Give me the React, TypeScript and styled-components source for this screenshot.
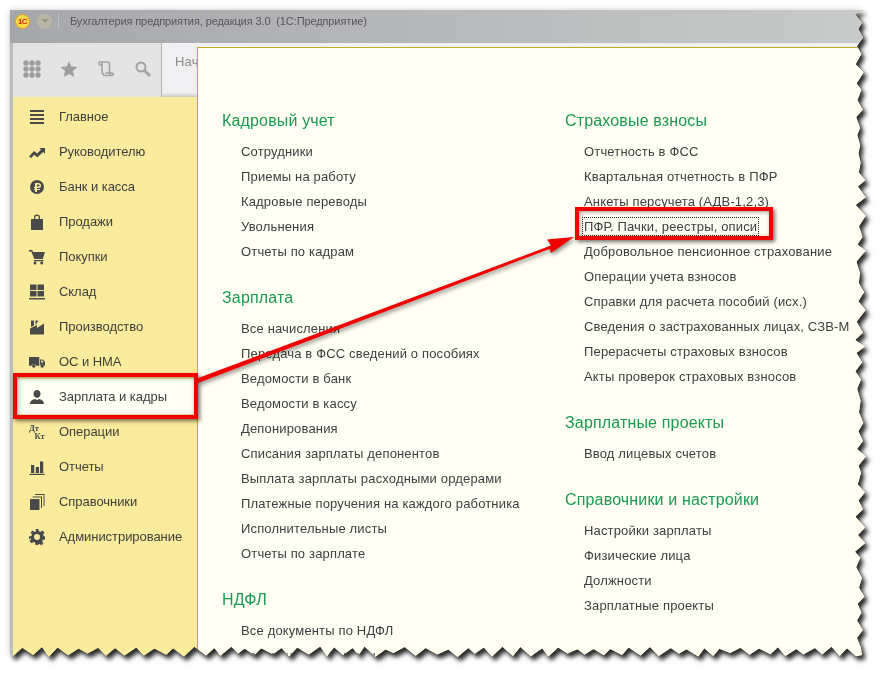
import React from "react";
import styled, { createGlobalStyle } from "styled-components";

const Global = createGlobalStyle`
  html, body { margin: 0; padding: 0; background: #fff; }
  body { width: 884px; height: 674px; overflow: hidden; font-family: "Liberation Sans", Arial, sans-serif; }
`;

function torn(): string {
  // seeded jagged outline of the screenshot's torn right and bottom edges
  let s = 11;
  const r = () => { s = (s * 16807) % 2147483647; return s / 2147483647; };
  const pts: string[] = ["10px 10px", "864px 10px"];
  let y = 14;
  while (y < 644) {
    pts.push(`${(855 + r() * 4).toFixed(1)}px ${y.toFixed(1)}px`);
    y += 6 + r() * 6;
    pts.push(`${(860 + r() * 6).toFixed(1)}px ${y.toFixed(1)}px`);
    y += 6 + r() * 6;
  }
  pts.push("862px 655px");
  let x = 856;
  while (x > 12) {
    pts.push(`${x.toFixed(1)}px ${(653 + r() * 4).toFixed(1)}px`);
    x -= 6 + r() * 6;
    pts.push(`${x.toFixed(1)}px ${(646.500 + r() * 3).toFixed(1)}px`);
    x -= 6 + r() * 6;
  }
  pts.push("10px 654px");
  return `polygon(${pts.join(",")})`;
}
const tornClip = torn();

const Stage = styled.div`
  position: relative;
  width: 884px;
  height: 674px;
  overflow: hidden;
`;
const Shadow = styled.div`
  width: 884px;
  height: 674px;
  filter: drop-shadow(3px 4px 2px rgba(0,0,0,.8)) drop-shadow(0 0 3px rgba(0,0,0,.2));
`;
const Sheet = styled.div`
  width: 884px;
  height: 674px;
  box-sizing: border-box;
  padding: 10px 0 0 10px;
  display: flex;
  flex-direction: column;
`;
const Win = styled.div`
  position: relative;
  width: 860px;
  height: 650px;
  display: flex;
  flex-direction: column;
  overflow: hidden;
  background: #fbeb9d;
`;
const TitleBar = styled.div`
  height: 33px;
  flex: none;
  box-sizing: border-box;
  display: flex;
  align-items: center;
  padding: 0 0 11px 5px;
  background: linear-gradient(90deg, #a6a7aa 0%, #c9caca 100%);
`;
const Logo = styled.div`
  width: 13px;
  height: 13px;
  border-radius: 50%;
  background: #f9d94a;
  border: 1px solid #dd9c2c;
  color: #d8221a;
  font: bold 8px "Liberation Sans", sans-serif;
  letter-spacing: -0.5px;
  display: flex;
  align-items: center;
  justify-content: center;
`;
const MenuDot = styled.div`
  width: 15px;
  height: 15px;
  margin-left: 7px;
  border-radius: 50%;
  background: #bab6a6;
  display: flex;
  align-items: center;
  justify-content: center;
  &::after {
    content: "";
    border: 4px solid transparent;
    border-top-color: #98958a;
    border-bottom: 0;
  }
`;
const TitleSep = styled.div`
  width: 1px;
  height: 15px;
  margin: 0 11px 0 6px;
  background: #bdbec0;
`;
const TitleText = styled.div`
  font-size: 11px;
  letter-spacing: -0.11px;
  color: #56565a;
  white-space: pre;
`;
const Body = styled.div`
  flex: 1;
  display: flex;
  flex-direction: column;
  min-height: 0;
  border-left: 3px solid #bcbcbc;
`;
const TopRow = styled.div`
  height: 54px;
  flex: none;
  display: flex;
`;
const Tools = styled.div`
  width: 149px;
  flex: none;
  box-sizing: border-box;
  display: flex;
  align-items: flex-start;
  padding: 17px 0 0 10px;
  gap: 19px;
  background: #e4e4e4;
  border-right: 1px solid #b4b4b4;
`;
const TabStrip = styled.div`
  flex: 1;
  box-sizing: border-box;
  padding: 11px 0 0 13px;
  font-size: 13px;
  letter-spacing: 0.2px;
  color: #8a8a8a;
  background: linear-gradient(180deg, #f0f0f2 0%, #f0f0f2 92%, #c9c9c9 100%);
`;
const Side = styled.div`
  width: 184px;
  flex: 1;
  display: flex;
  flex-direction: column;
  background: #fbeb9d;
`;
const Nav = styled.nav`
  padding-top: 2px;
  display: flex;
  flex-direction: column;
`;
const NavRow = styled.div<{ $active?: boolean }>`
  height: 35px;
  display: flex;
  align-items: center;
  padding-left: 16px;
  gap: 14px;
  font-size: 13px;
  letter-spacing: -0.05px;
  color: #3e3e3e;
  background: ${(p) => (p.$active ? "#fffff3" : "transparent")};
`;
const IconBox = styled.span`
  width: 16px;
  height: 16px;
  flex: none;
  display: block;
  color: #4a4a4a;
  svg { display: block; width: 16px; height: 16px; fill: currentColor; }
`;
const Panel = styled.div`
  position: absolute;
  left: 187px;
  top: 37px;
  right: 0;
  bottom: 0;
  box-sizing: border-box;
  background: #fffff3;
  border-top: 1px solid #c3a926;
  border-left: 1px solid #c3a926;
  display: grid;
  grid-template-columns: 343px 1fr;
  padding: 63px 0 0 24px;
  overflow: hidden;
`;
const Column = styled.div`
  display: flex;
  flex-direction: column;
  gap: 24px;
`;
const Section = styled.section`
  display: flex;
  flex-direction: column;
`;
const Heading = styled.div`
  height: 20px;
  line-height: 20px;
  margin-bottom: 8px;
  font-size: 16px;
  letter-spacing: 0.16px;
  color: #1b9a53;
`;
const LinkRow = styled.div`
  height: 25px;
  line-height: 25px;
  padding-left: 19px;
  font-size: 13px;
  letter-spacing: 0.16px;
  white-space: nowrap;
  color: #3e3e3e;
`;
const Focused = styled.span`
  outline: 1px dotted #222;
  outline-offset: 1px;
`;
const RedBox = styled.div<{ $x: number; $y: number; $w: number; $h: number }>`
  position: absolute;
  left: ${(p) => p.$x}px;
  top: ${(p) => p.$y}px;
  width: ${(p) => p.$w}px;
  height: ${(p) => p.$h}px;
  box-sizing: border-box;
  border: 4px solid #f00000;
  box-shadow: 2px 2px 4px rgba(0,0,0,.55), inset 1px 1px 4px rgba(0,0,0,.4);
`;
const ArrowSvg = styled.svg`
  position: absolute;
  left: 0;
  top: 0;
  width: 884px;
  height: 674px;
  pointer-events: none;
  filter: drop-shadow(2px 2px 2px rgba(0,0,0,.45));
`;
const DkText = styled.text`
  font: bold 8.500px "Liberation Serif", serif;
`;

const icons: Record<string, React.ReactNode> = {
  main: <path d="M1 1h14v2H1zM1 5h14v2H1zM1 9h14v2H1zM1 13h14v2H1z" />,
  chief: <path d="M0 12.500l5-5.500 3.200 2.500L12 5.500 10.300 4H16v5.700l-1.800-1.800-5.800 5.300-3.200-2.500-3 3.200z" />,
  bank: <path fillRule="evenodd" d="M8 1a7 7 0 110 14A7 7 0 018 1zM6 4v4H5v1h1v1H5v1h1v2h2v-2h3v-1H8V9h1.500a2.500 2.500 0 000-5zM8 5.500h1.500a1 1 0 010 2H8z" />,
  sales: <path fillRule="evenodd" d="M5 5V3.500a3 3 0 016 0V5h3v11H2V5zM6.300 5h3.400V3.500a1.700 1.700 0 00-3.400 0z" />,
  buy: <path d="M0 1h3.300l.7 2h12l-2.200 7H5.300L2.300 2.600H0zM5 11h9.500v1.200H5zM6 12.500a1.500 1.500 0 110 3 1.500 1.500 0 010-3zM12.700 12.500a1.500 1.500 0 110 3 1.500 1.500 0 010-3z" />,
  stock: <path d="M1 .500h6.500V6H1zM8.500.500H15V6H8.500zM1 7h6.500v5.500H1zM8.500 7H15v5.500H8.500zM0 14h16v1.500H0z" />,
  prod: <path d="M2 1.500h3v5l-3 1.500zM6.500 1.500h3L6.500 6zM1 15.500V9.500l7-3.500v3l7-4.500v11z" />,
  os: <path fillRule="evenodd" d="M0 3h10.300v8.700H7a2.300 2.300 0 00-4.400 0H0zM11 5.500h3l2 2.500v3.700h-.7a2.300 2.300 0 00-4.300 0zM12 6.500v2h2.700l-1.400-2zM4.800 10.300a1.700 1.700 0 110 3.400 1.700 1.700 0 010-3.400zM13.200 10.300a1.700 1.700 0 110 3.400 1.700 1.700 0 010-3.400z" />,
  user: <path d="M8 1c2 0 3.500 1.500 3.500 3.800S10 9 8 9 4.500 7.100 4.500 4.800 6 1 8 1zM1 15c0-3 2.500-4.500 5-5l2 1 2-1c2.500.5 5 2 5 5z" />,
  ops: (
    <>
      <DkText x="0" y="6.500">Дт</DkText>
      <DkText x="5.500" y="15">Кт</DkText>
    </>
  ),
  rep: <path d="M2 6h3.200v8H2zM6.800 8H10v6H6.800zM11 2.500h3.200V14H11zM0.500 14.700h15V16H.5z" />,
  ref: <path d="M1 5h9.500v11H1zM3.500 2.500H13V14h-1V3.500H3.500zM6 0h9.500v12h-1V1H6z" />,
  admin: <path fillRule="evenodd" d="M6.500 0h3l.4 2.300 1.500.6 2-1.300 2 2-1.300 2 .6 1.500L16 7.500v3l-2.300.4-.6 1.400 1.300 2-2 2-2-1.300-1.500.6L9.500 16h-3l-.4-2.400-1.500-.6-2 1.300-2-2 1.300-2-.6-1.400L0 10.500v-3l2.300-.4.6-1.500-1.300-2 2-2 2 1.300 1.500-.6zM8 5a3 3 0 100 6 3 3 0 000-6z" />,
};

const nav: [string, string][] = [
  ["main", "Главное"], ["chief", "Руководителю"], ["bank", "Банк и касса"], ["sales", "Продажи"],
  ["buy", "Покупки"], ["stock", "Склад"], ["prod", "Производство"], ["os", "ОС и НМА"],
  ["user", "Зарплата и кадры"], ["ops", "Операции"], ["rep", "Отчеты"], ["ref", "Справочники"], ["admin", "Администрирование"],
];

type Sec = { title: string; items: string[] };
const left: Sec[] = [
  { title: "Кадровый учет", items: ["Сотрудники", "Приемы на работу", "Кадровые переводы", "Увольнения", "Отчеты по кадрам"] },
  { title: "Зарплата", items: ["Все начисления", "Передача в ФСС сведений о пособиях", "Ведомости в банк", "Ведомости в кассу", "Депонирования", "Списания зарплаты депонентов", "Выплата зарплаты расходными ордерами", "Платежные поручения на каждого работника", "Исполнительные листы", "Отчеты по зарплате"] },
  { title: "НДФЛ", items: ["Все документы по НДФЛ", "Заявления на вычеты"] },
];
const right: Sec[] = [
  { title: "Страховые взносы", items: ["Отчетность в ФСС", "Квартальная отчетность в ПФР", "Анкеты персучета (АДВ-1,2,3)", "ПФР. Пачки, реестры, описи", "Добровольное пенсионное страхование", "Операции учета взносов", "Справки для расчета пособий (исх.)", "Сведения о застрахованных лицах, СЗВ-М", "Перерасчеты страховых взносов", "Акты проверок страховых взносов"] },
  { title: "Зарплатные проекты", items: ["Ввод лицевых счетов"] },
  { title: "Справочники и настройки", items: ["Настройки зарплаты", "Физические лица", "Должности", "Зарплатные проекты"] },
];

const renderSections = (list: Sec[]) =>
  list.map((s) => (
    <Section key={s.title}>
      <Heading>{s.title}</Heading>
      {s.items.map((i) => (
        <LinkRow key={i}>{i === "ПФР. Пачки, реестры, описи" ? <Focused>{i}</Focused> : i}</LinkRow>
      ))}
    </Section>
  ));

export default function App() {
  return (
    <Stage>
      <Global />
      <Shadow>
        <Sheet style={{ clipPath: tornClip }}>
          <Win>
            <TitleBar>
              <Logo>1С</Logo>
              <MenuDot />
              <TitleSep />
              <TitleText>Бухгалтерия предприятия, редакция 3.0  (1С:Предприятие)</TitleText>
            </TitleBar>
            <Body>
              <TopRow>
                <Tools>
                  <svg width="18" height="18" viewBox="0 0 18 18" fill="#9d9d9d">
                    {[3, 9, 15].map((y) => [3, 9, 15].map((x) => <circle key={`${x}${y}`} cx={x} cy={y} r="2.700" />))}
                  </svg>
                  <svg width="18" height="18" viewBox="0 0 18 18" fill="#9d9d9d"><path d="M9 1l2.400 5.600 6.100.5-4.600 4 1.400 6L9 14l-5.300 3.100 1.400-6-4.600-4 6.100-.5z" /></svg>
                  <svg width="18" height="18" viewBox="0 0 18 18" fill="none" stroke="#a3a3a3" strokeWidth="1.600"><path d="M3 2h8c1 0 1.500 1 1.500 2v9c0 1.500 1 2.500 2.500 2.500s1.500-2.500 0-2.500H8.500M3 2c-1.500 0-1.500 2.500 0 3h2M5 2v8c0 3 1 5.500 3.500 5.500H15" /></svg>
                  <svg width="18" height="18" viewBox="0 0 18 18" fill="none" stroke="#a3a3a3"><circle cx="7" cy="7" r="4.500" strokeWidth="2" /><path d="M10.500 10.500L16 16" strokeWidth="3" /></svg>
                </Tools>
                <TabStrip>Нач</TabStrip>
              </TopRow>
              <Side>
                <Nav>
                  {nav.map(([k, t]) => (
                    <NavRow key={k} $active={k === "user"}>
                      <IconBox><svg viewBox="0 0 16 16">{icons[k]}</svg></IconBox>
                      {t}
                    </NavRow>
                  ))}
                </Nav>
              </Side>
            </Body>
            <Panel>
              <Column>{renderSections(left)}</Column>
              <Column>{renderSections(right)}</Column>
            </Panel>
          </Win>
        </Sheet>
      </Shadow>
      <RedBox $x={13} $y={373} $w={185} $h={46} />
      <RedBox $x={575} $y={207} $w={198} $h={33} />
      <ArrowSvg viewBox="0 0 884 674">
        <path d="M197 378.500 L551 245.500 L547 239.500 L574 237 L551 253 L549.500 249 L198 383 Z" fill="#f00000" />
      </ArrowSvg>
    </Stage>
  );
}
